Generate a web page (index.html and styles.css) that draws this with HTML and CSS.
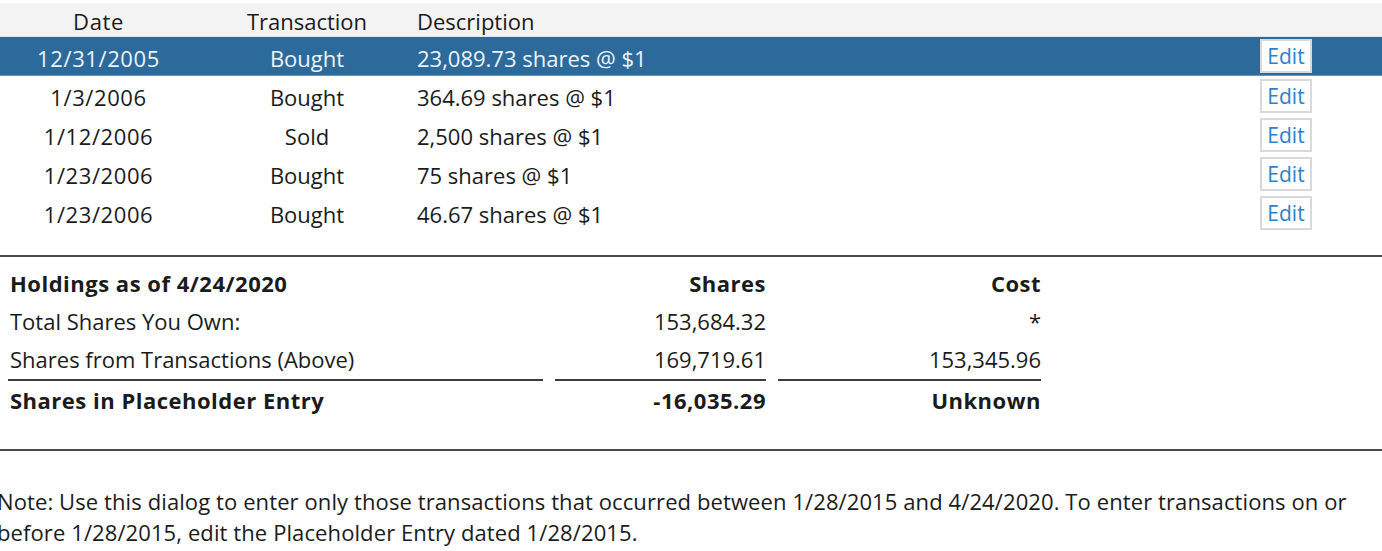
FILE: index.html
```html
<!DOCTYPE html>
<html>
<head>
<meta charset="utf-8">
<link rel="stylesheet" href="styles.css">
</head>
<body>
<div class="page">
  <div class="tx-table">
    <div class="tx-row tx-head">
      <div class="c-date">Date</div>
      <div class="c-type">Transaction</div>
      <div class="c-desc">Description</div>
      <div class="c-edit"></div>
    </div>
    <div class="tx-row selected">
      <div class="c-date">12/31/2005</div>
      <div class="c-type">Bought</div>
      <div class="c-desc">23,089.73 shares @ $1</div>
      <div class="c-edit"><button class="edit">Edit</button></div>
    </div>
    <div class="tx-row">
      <div class="c-date">1/3/2006</div>
      <div class="c-type">Bought</div>
      <div class="c-desc">364.69 shares @ $1</div>
      <div class="c-edit"><button class="edit">Edit</button></div>
    </div>
    <div class="tx-row">
      <div class="c-date">1/12/2006</div>
      <div class="c-type">Sold</div>
      <div class="c-desc">2,500 shares @ $1</div>
      <div class="c-edit"><button class="edit">Edit</button></div>
    </div>
    <div class="tx-row">
      <div class="c-date">1/23/2006</div>
      <div class="c-type">Bought</div>
      <div class="c-desc">75 shares @ $1</div>
      <div class="c-edit"><button class="edit">Edit</button></div>
    </div>
    <div class="tx-row">
      <div class="c-date">1/23/2006</div>
      <div class="c-type">Bought</div>
      <div class="c-desc">46.67 shares @ $1</div>
      <div class="c-edit"><button class="edit">Edit</button></div>
    </div>
  </div>

  <div class="divider first"></div>

  <div class="holdings">
    <div class="h-row bold">
      <div class="h-label">Holdings as of 4/24/2020</div>
      <div class="h-num">Shares</div>
      <div class="h-num">Cost</div>
    </div>
    <div class="h-row">
      <div class="h-label">Total Shares You Own:</div>
      <div class="h-num">153,684.32</div>
      <div class="h-num">*</div>
    </div>
    <div class="h-row">
      <div class="h-label">Shares from Transactions (Above)</div>
      <div class="h-num">169,719.61</div>
      <div class="h-num">153,345.96</div>
    </div>
    <div class="h-rules">
      <div class="rule"></div>
      <div class="rule"></div>
      <div class="rule"></div>
    </div>
    <div class="h-row bold last">
      <div class="h-label">Shares in Placeholder Entry</div>
      <div class="h-num">-16,035.29</div>
      <div class="h-num">Unknown</div>
    </div>
  </div>

  <div class="divider second"></div>

  <p class="note">Note: Use this dialog to enter only those transactions that occurred between 1/28/2015 and 4/24/2020. To enter transactions on or before 1/28/2015, edit the Placeholder Entry dated 1/28/2015.</p>
</div>
</body>
</html>
```

FILE: styles.css
```css
html, body {
  margin: 0;
  padding: 0;
  background: #ffffff;
  overflow: hidden;
}

.page {
  width: 1382px;
  height: 551px;
  padding-top: 3px;
  box-sizing: border-box;
  font-family: "Open Sans", "Noto Sans", sans-serif;
  font-size: 22px;
  color: #1b1b1b;
}

.tx-row {
  display: grid;
  grid-template-columns: 197px 220px 1fr 52px 70px;
  align-items: center;
  height: 39px;
}

.tx-head {
  height: 34px;
  background: #f3f3f3;
  border-bottom: 1px solid #dfe6ee;
  box-sizing: border-box;
}

.c-date, .c-type, .c-desc {
  padding-top: 3px;
  line-height: 30px;
}

.c-date, .c-type {
  text-align: center;
}

.c-date {
  letter-spacing: 0.6px;
}

.selected {
  background: #2d6a9c;
  color: #eef3f8;
  border-bottom: 1px solid #6f98bd;
  box-sizing: border-box;
}

.edit {
  display: block;
  width: 52px;
  height: 34px;
  padding: 0;
  margin: 0;
  background: #ffffff;
  border: 2px solid #d9d9d9;
  font-family: inherit;
  font-size: 21px;
  color: #2f7fd0;
  cursor: pointer;
}

.divider {
  height: 2px;
  background: #4a4a4a;
}

.divider.first {
  margin-top: 23px;
}

.holdings {
  padding-left: 8px;
  margin-top: 7px;
}

.h-row,
.h-rules {
  display: grid;
  grid-template-columns: 535px 211px 263px;
  column-gap: 12px;
  align-items: center;
}

.h-row {
  height: 38px;
  line-height: 30px;
}

.h-row.last {
  height: 37px;
}

.h-label {
  padding-left: 2px;
}

.h-num {
  text-align: right;
}

.bold {
  font-weight: 700;
  letter-spacing: 0.5px;
}

.h-rules {
  height: 2px;
  margin-top: 1px;
}

.rule {
  height: 2px;
  background: #3c3c3c;
}

.divider.second {
  margin-top: 31px;
}

.note {
  margin: 35px 0 0 -3px;
  line-height: 31px;
  width: 1372px;
  letter-spacing: 0.1px;
}
```
